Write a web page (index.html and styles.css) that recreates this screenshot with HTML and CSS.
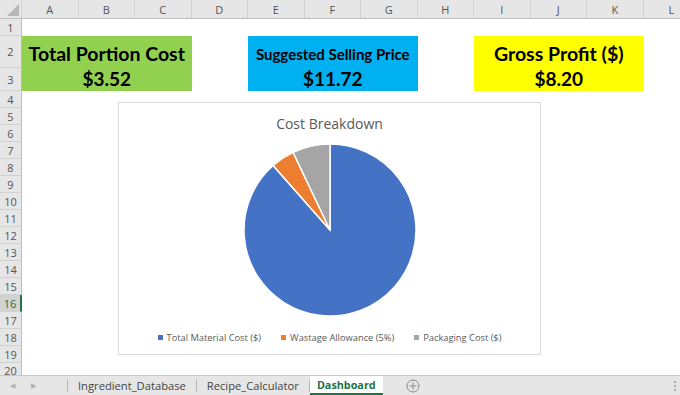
FILE: index.html
```html
<html>
  <head>
    <link rel="stylesheet" href="styles.css">
    <title>Dashboard</title>
  </head>
  <body>
    <div class="window">
      <div class="sheet">
        <div class="corner"><svg width="14" height="14" viewBox="0 0 14 14"><polygon points="14,2 14,14 2,14" fill="#b7b7b7"/></svg></div>
        <div class="col-head">A</div>
        <div class="col-head">B</div>
        <div class="col-head">C</div>
        <div class="col-head">D</div>
        <div class="col-head">E</div>
        <div class="col-head">F</div>
        <div class="col-head">G</div>
        <div class="col-head">H</div>
        <div class="col-head">I</div>
        <div class="col-head">J</div>
        <div class="col-head">K</div>
        <div class="col-head">L</div>

        <div class="row-head r1">1</div>
        <div class="row-head r2">2</div>
        <div class="row-head r3">3</div>
        <div class="row-head" style="grid-row: 5">4</div>
        <div class="row-head" style="grid-row: 6">5</div>
        <div class="row-head" style="grid-row: 7">6</div>
        <div class="row-head" style="grid-row: 8">7</div>
        <div class="row-head" style="grid-row: 9">8</div>
        <div class="row-head" style="grid-row: 10">9</div>
        <div class="row-head" style="grid-row: 11">10</div>
        <div class="row-head" style="grid-row: 12">11</div>
        <div class="row-head" style="grid-row: 13">12</div>
        <div class="row-head" style="grid-row: 14">13</div>
        <div class="row-head" style="grid-row: 15">14</div>
        <div class="row-head" style="grid-row: 16">15</div>
        <div class="row-head active" style="grid-row: 17">16</div>
        <div class="row-head" style="grid-row: 18">17</div>
        <div class="row-head" style="grid-row: 19">18</div>
        <div class="row-head" style="grid-row: 20">19</div>
        <div class="row-head last" style="grid-row: 21">20</div>

        <div class="kpi kpi-green">
          <div class="kpi-label">Total Portion Cost</div>
          <div class="kpi-value">$3.52</div>
        </div>
        <div class="kpi kpi-blue">
          <div class="kpi-label small">Suggested Selling Price</div>
          <div class="kpi-value">$11.72</div>
        </div>
        <div class="kpi kpi-yellow">
          <div class="kpi-label">Gross Profit ($)</div>
          <div class="kpi-value">$8.20</div>
        </div>

        <div class="chart">
          <div class="chart-title">Cost Breakdown</div>
          <svg class="pie" width="180" height="180" viewBox="-90 -90 180 180">
            <path d="M0,0 L0,-86 A86,86 0 1 1 -56.87,-64.51 Z" fill="#4472c4" stroke="#fff" stroke-width="1.5"/>
            <path d="M0,0 L-56.87,-64.51 A86,86 0 0 1 -36.89,-77.69 Z" fill="#ed7d31" stroke="#fff" stroke-width="1.5"/>
            <path d="M0,0 L-36.89,-77.69 A86,86 0 0 1 0,-86 Z" fill="#a5a5a5" stroke="#fff" stroke-width="1.5"/>
          </svg>
          <div class="legend">
            <span class="legend-item"><i class="swatch blue"></i>Total Material Cost ($)</span>
            <span class="legend-item"><i class="swatch orange"></i>Wastage Allowance (5%)</span>
            <span class="legend-item"><i class="swatch grey"></i>Packaging Cost ($)</span>
          </div>
        </div>
      </div>

      <div class="tabbar">
        <div class="nav">
          <span class="arrow">&#9664;</span>
          <span class="arrow">&#9654;</span>
        </div>
        <div class="tab">Ingredient_Database</div>
        <div class="tab">Recipe_Calculator</div>
        <div class="tab current">Dashboard</div>
        <div class="add">
          <svg width="14" height="14" viewBox="0 0 14 14">
            <circle cx="7" cy="7" r="6" fill="none" stroke="#8a8a8a" stroke-width="1"/>
            <path d="M7 3.5 V10.5 M3.5 7 H10.5" stroke="#8a8a8a" stroke-width="1"/>
          </svg>
        </div>
        <div class="dots">
          <svg width="4" height="12" viewBox="0 0 4 12">
            <circle cx="2" cy="2" r="1.1" fill="#a0a0a0"/>
            <circle cx="2" cy="6" r="1.1" fill="#a0a0a0"/>
            <circle cx="2" cy="10" r="1.1" fill="#a0a0a0"/>
          </svg>
        </div>
      </div>
    </div>
  </body>
</html>
```

FILE: styles.css
```css
body {
  margin: 0;
  font-family: "Open Sans", "Noto Sans", sans-serif;
  background: #fff;
}

.window {
  width: 680px;
  height: 395px;
  display: flex;
  flex-direction: column;
  overflow: hidden;
}

.sheet {
  position: relative;
  flex: 1;
  overflow: hidden;
  display: grid;
  grid-template-columns: 22px repeat(12, 56.5px);
  grid-template-rows: 19px 17px 32px 23px repeat(17, 17px);
}

.corner {
  grid-row: 1;
  grid-column: 1;
  background: #e6e6e6;
  border-right: 1px solid #d4d4d4;
  border-bottom: 1px solid #bdbdbd;
  display: flex;
  align-items: flex-end;
  justify-content: flex-end;
  padding: 0 2px 2px 0;
}

.col-head {
  grid-row: 1;
  background: #e6e6e6;
  border-right: 1px solid #d0d0d0;
  border-bottom: 1px solid #bdbdbd;
  font-size: 11px;
  color: #555;
  display: flex;
  align-items: center;
  justify-content: center;
}

.row-head {
  grid-column: 1;
  background: #e6e6e6;
  border-right: 1px solid #bdbdbd;
  border-bottom: 1px solid #d0d0d0;
  font-size: 11px;
  color: #555;
  display: flex;
  align-items: center;
  justify-content: center;
}

.row-head.last {
  align-items: flex-start;
}

.r1 { grid-row: 2; }
.r2 { grid-row: 3; }
.r3 { grid-row: 4; }

.row-head.active {
  background: #d2d2d2;
  color: #217346;
  border-right: 2px solid #217346;
}

.kpi {
  grid-row: 3 / 5;
  display: flex;
  flex-direction: column;
  align-items: center;
  font-family: "Lato", "Open Sans", sans-serif;
  font-weight: bold;
  color: #000;
}

.kpi-green {
  grid-column: 2 / 5;
  background: #92d050;
}

.kpi-blue {
  grid-column: 6 / 9;
  background: #00b0f0;
}

.kpi-yellow {
  grid-column: 10 / 13;
  background: #ffff00;
}

.kpi-label {
  height: 31px;
  display: flex;
  align-items: center;
  font-size: 19.5px;
  padding-top: 2px;
}

.kpi-label.small {
  font-size: 15px;
}

.kpi-value {
  font-size: 19px;
  line-height: 20px;
}

.chart {
  position: absolute;
  left: 118px;
  top: 102px;
  width: 421px;
  height: 251px;
  border: 1px solid #d9d9d9;
  background: #fff;
  display: flex;
  flex-direction: column;
  align-items: center;
}

.chart-title {
  margin-top: 11px;
  font-size: 14px;
  color: #595959;
}

.pie {
  margin-top: 7px;
}

.legend {
  margin-top: 11px;
  display: flex;
  gap: 20px;
  font-size: 9.3px;
  color: #595959;
}

.legend-item {
  display: flex;
  align-items: center;
}

.swatch {
  width: 5px;
  height: 5px;
  margin-right: 4px;
}

.swatch.blue { background: #4472c4; }
.swatch.orange { background: #ed7d31; }
.swatch.grey { background: #a5a5a5; }

.tabbar {
  height: 19px;
  background: #e6e6e6;
  border-top: 1px solid #c6c6c6;
  display: flex;
  align-items: stretch;
  font-size: 11.2px;
  color: #444;
}

.nav {
  width: 68px;
  display: flex;
  align-items: center;
  gap: 16px;
  padding-left: 10px;
  box-sizing: border-box;
  border-right: 1px solid #b8b8b8;
  margin: 3px 0;
}

.arrow {
  font-size: 7px;
  color: #b0b0b0;
}

.tab {
  display: flex;
  align-items: center;
  padding: 0 10px;
  border-right: 1px solid #b8b8b8;
  margin: 3px 0;
}

.tab.current {
  margin: 0;
  background: #fff;
  color: #217346;
  font-size: 10.8px;
  font-weight: bold;
  border-bottom: 2px solid #217346;
  border-right: none;
  padding: 0 7px;
}

.add {
  display: flex;
  align-items: center;
  padding-left: 23px;
}

.dots {
  margin-left: auto;
  display: flex;
  align-items: center;
  padding-right: 3px;
}
```
